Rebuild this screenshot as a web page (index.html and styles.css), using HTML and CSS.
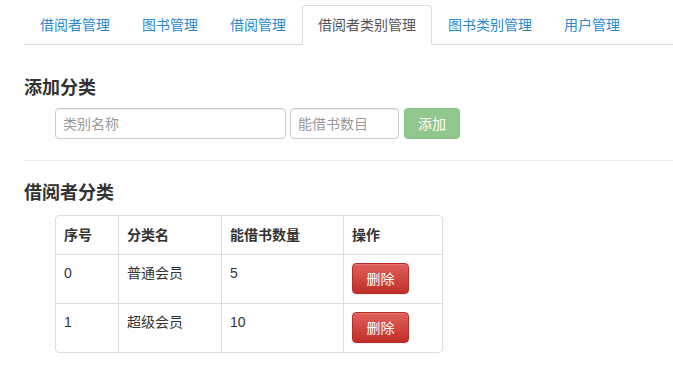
FILE: index.html
```html
<!DOCTYPE html>
<html lang="zh-CN">
<head>
    <meta charset="UTF-8">
    <title>借阅者类别管理</title>
    <link rel="stylesheet" href="styles.css">
</head>
<body>
    <div class="page">
        <!-- top tabs -->
        <ul class="nav-tabs">
            <li><a href="#">借阅者管理</a></li>
            <li><a href="#">图书管理</a></li>
            <li><a href="#">借阅管理</a></li>
            <li class="active"><a href="#">借阅者类别管理</a></li>
            <li><a href="#">图书类别管理</a></li>
            <li><a href="#">用户管理</a></li>
        </ul>

        <h4 class="section-title first">添加分类</h4>
        <form class="add-form">
            <input type="text" class="input name-input" placeholder="类别名称">
            <input type="text" class="input count-input" placeholder="能借书数目">
            <button type="button" class="btn btn-add" disabled>添加</button>
        </form>

        <hr class="divider">

        <h4 class="section-title">借阅者分类</h4>
        <table class="type-table">
            <thead>
                <tr>
                    <th class="col-id">序号</th>
                    <th class="col-name">分类名</th>
                    <th class="col-count">能借书数量</th>
                    <th class="col-op">操作</th>
                </tr>
            </thead>
            <tbody>
                <tr>
                    <td>0</td>
                    <td>普通会员</td>
                    <td>5</td>
                    <td><button type="button" class="btn btn-delete">删除</button></td>
                </tr>
                <tr>
                    <td>1</td>
                    <td>超级会员</td>
                    <td>10</td>
                    <td><button type="button" class="btn btn-delete">删除</button></td>
                </tr>
            </tbody>
        </table>
    </div>
</body>
</html>
```

FILE: styles.css
```css
* {
    box-sizing: border-box;
}

body {
    margin: 0;
    font-family: "Liberation Sans", "Noto Sans CJK SC", sans-serif;
    font-size: 14px;
    line-height: 20px;
    color: #333;
    background: #fff;
}

.page {
    padding: 5px 0 0 24px;
}

/* tabs */
.nav-tabs {
    list-style: none;
    margin: 0;
    padding: 0;
    display: flex;
    border-bottom: 1px solid #ddd;
}
.nav-tabs li {
    margin-bottom: -1px;
}
.nav-tabs a {
    display: block;
    padding: 9px 15px;
    border: 1px solid transparent;
    border-radius: 4px 4px 0 0;
    color: #2a88cc;
    text-decoration: none;
}
.nav-tabs .active a {
    color: #555;
    background: #fff;
    border-color: #ddd #ddd transparent;
}

/* headings */
.section-title {
    margin: 22px 0 12px;
    font-size: 18px;
    line-height: 20px;
    font-weight: 700;
}
.section-title.first {
    margin-top: 33px;
    margin-bottom: 10px;
}

/* add form */
.add-form {
    display: flex;
    gap: 4px;
    margin-left: 31px;
}
.input {
    height: 31px;
    padding: 5px 7px;
    border: 1px solid #ccc;
    border-radius: 4px;
    font: inherit;
    color: #555;
    box-shadow: inset 0 1px 1px rgba(0, 0, 0, 0.075);
}
.input::placeholder {
    color: #999;
}
.name-input {
    width: 231px;
}
.count-input {
    width: 109px;
}

.btn {
    font: inherit;
    color: #fff;
    border-radius: 4px;
    cursor: pointer;
}
.btn-add {
    margin-left: 1px;
    width: 56px;
    height: 31px;
    padding: 0;
    border: 1px solid #86bf86;
    background: #8fc78f;
}

.divider {
    margin: 21px 0 0;
    border: 0;
    border-top: 1px solid #eee;
}

/* table */
.type-table {
    margin-left: 31px;
    width: 388px;
    table-layout: fixed;
    border-collapse: separate;
    border-spacing: 0;
    border: 1px solid #ddd;
    border-radius: 4px;
}
.type-table th,
.type-table td {
    text-align: left;
    vertical-align: top;
    padding: 8px 8px 9px;
    border-left: 1px solid #ddd;
    border-top: 1px solid #ddd;
}
.type-table th {
    padding: 9px 8px;
    border-top: 0;
    font-weight: 700;
}
.type-table th:first-child,
.type-table td:first-child {
    border-left: 0;
}
.col-id { width: 62px; }
.col-name { width: 103px; }
.col-count { width: 122px; }
.col-op { width: 99px; }

.btn-delete {
    display: block;
    width: 57px;
    height: 31px;
    padding: 0;
    border: 1px solid #b92c28;
    background: linear-gradient(#e0605b, #c12e2a);
    box-shadow: inset 0 1px 0 rgba(255, 255, 255, 0.15), 0 1px 1px rgba(0, 0, 0, 0.075);
}
```
